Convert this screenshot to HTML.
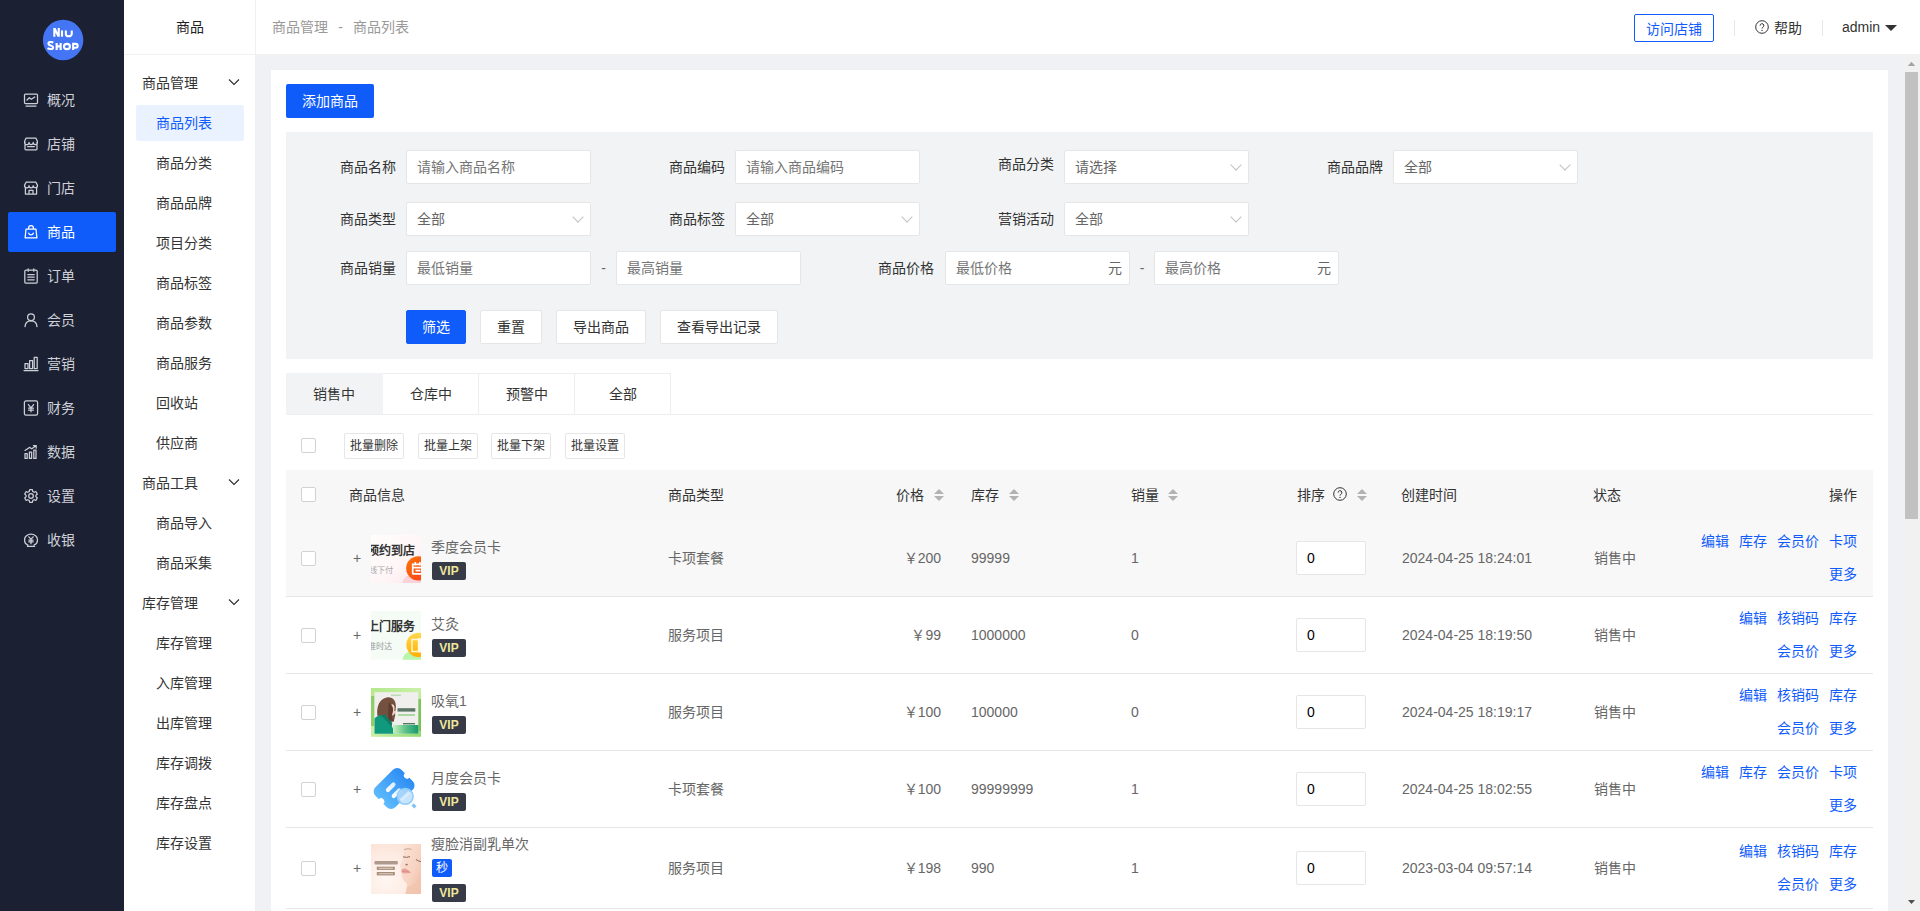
<!DOCTYPE html>
<html lang="zh-CN">
<head>
<meta charset="utf-8">
<title>商品列表</title>
<style>
*{box-sizing:border-box;margin:0;padding:0}
html,body{width:1920px;height:911px;overflow:hidden}
body{font-family:"Liberation Sans",sans-serif;font-size:14px;color:#333;background:#f0f1f4;position:relative}
a{text-decoration:none;color:inherit}
/* ===== first level sidebar ===== */
.side1{position:absolute;left:0;top:0;width:124px;height:911px;background:#1c2033}
.logo{position:absolute;left:42px;top:19px;width:41px;height:41px;border-radius:50%;background:#3f73f5;color:#fff;text-align:center;font-weight:bold;line-height:1}
.logo span{display:block;font-variant:small-caps;letter-spacing:.3px}
.logo .l1{font-size:12px;margin-top:7px;height:12px}
.logo .l2{font-size:14px;height:13px;margin-top:0}
.m1{position:absolute;left:8px;width:108px;height:40px;border-radius:2px;color:#ced0d8;font-size:14px;line-height:40px}
.m1 svg{position:absolute;left:15px;top:12px;width:16px;height:16px;fill:none;stroke:#ced0d8;stroke-width:1.250;stroke-linecap:round;stroke-linejoin:round}
.m1 span{position:absolute;left:39px;top:0}
.m1.on{background:#105cfb;color:#fff}
.m1.on svg{stroke:#fff}
/* ===== second level sidebar ===== */
.side2{position:absolute;left:124px;top:0;width:132px;height:911px;background:#fff;border-right:1px solid #f0f0f0}
.side2 .hd{height:55px;line-height:54px;text-align:center;border-bottom:1px solid #f0f0f0;color:#222;font-size:14px}
.g{position:absolute;left:18px;width:100px;height:20px;line-height:20px;color:#333}
.g svg{position:absolute;left:86px;top:5px;width:12px;height:8px;fill:none;stroke:#333;stroke-width:1.2}
.s{position:absolute;left:12px;width:108px;height:36px;line-height:36px;padding-left:20px;color:#333;border-radius:2px}
.s.on{background:#ebf2ff;color:#105cfb}
/* ===== header ===== */
.top{position:absolute;left:256px;top:0;width:1664px;height:55px;background:#fff;border-bottom:1px solid #f0f0f0}
.crumb{position:absolute;left:16px;top:0;line-height:54px;color:#999;font-size:14px;white-space:nowrap}
.crumb i{font-style:normal;display:inline-block;width:25px;text-align:center}
.visit{position:absolute;left:1378px;top:14px;width:80px;height:28px;border:1px solid #105cfb;border-radius:2px;color:#105cfb;text-align:center;line-height:28px;font-size:14px}
.vline{position:absolute;top:20px;width:1px;height:16px;background:#e6e6e6}
.help{position:absolute;left:1499px;top:0;line-height:57px;color:#333}
.help svg{position:absolute;left:0;top:20px;width:14px;height:14px}
.help span{padding-left:19px}
.admin{position:absolute;left:1586px;top:0;line-height:55px;color:#333}
.admin i{position:absolute;left:43px;top:25px;border:6px solid transparent;border-top-color:#333;border-bottom:0;width:0;height:0}
/* ===== scrollbar ===== */
.sb{position:absolute;left:1903px;top:55px;width:17px;height:856px;background:#f1f1f1}
.sb .th{position:absolute;left:2px;top:17px;width:13px;height:447px;background:#c1c1c1}
.sb .up{position:absolute;left:4.800px;top:6.700px;width:7.400px;height:4.300px;background:#a3a3a3;clip-path:polygon(50% 0,100% 100%,0 100%)}
.sb .dn{position:absolute;left:4.800px;top:844.700px;width:7.400px;height:4.300px;background:#505050;clip-path:polygon(0 0,100% 0,50% 100%)}
/* ===== content card ===== */
.card{position:absolute;left:271px;top:70px;width:1617px;height:841px;background:#fff}
.abs{position:absolute}
.btn-add{left:15px;top:14px;width:88px;height:34px;background:#105cfb;color:#fff;border-radius:2px;text-align:center;line-height:34px}
.filter{left:15px;top:62px;width:1587px;height:227px;background:#f2f3f5}
.lb{position:absolute;width:90px;text-align:right;color:#333;height:34px;line-height:34px}
.ip{position:absolute;width:185px;height:34px;background:#fff;border:1px solid #e6e6e6;border-radius:2px;line-height:32px;padding-left:10px;color:#757575}
.ip.sel{color:#666}
.ip.sel:after{content:"";position:absolute;right:8px;top:10px;width:7px;height:7px;border-right:1px solid #c2c2c2;border-bottom:1px solid #c2c2c2;transform:rotate(45deg)}
.ip em{position:absolute;right:7px;top:0;font-style:normal;color:#666}
.dash{position:absolute;width:25px;text-align:center;line-height:34px;color:#666}
.fb{position:absolute;top:178px;height:34px;line-height:32px;border:1px solid #e6e6e6;border-radius:2px;background:#fff;color:#333;text-align:center}
.fb.pri{background:#105cfb;border-color:#105cfb;color:#fff}
/* tabs */
.tabs{left:15px;top:303px;width:1587px;height:42px;border-bottom:1px solid #eee}
.tab{position:absolute;top:0;width:96px;height:41px;line-height:40px;text-align:center;border:1px solid #eee;border-left:0;border-bottom:0;color:#333}
.tab.on{background:#f2f3f5;border-color:#f2f3f5;width:97px}
.ck{position:absolute;width:15px;height:15px;border:1px solid #d2d2d2;border-radius:2px;background:#fff}
.bb{position:absolute;top:363px;width:60px;height:26px;border:1px solid #e6e6e6;border-radius:2px;font-size:12px;line-height:24px;text-align:center;color:#333;background:#fff}
/* table */
.thead{left:15px;top:400px;width:1587px;height:50px;background:#f7f7f7;line-height:50px;color:#333}
.thead span{position:absolute;top:0;white-space:nowrap}
.sort{position:absolute;width:10px;height:14px}
.sort:before,.sort:after{content:"";position:absolute;left:0;border:5px solid transparent}
.sort:before{top:-4px;border-bottom-color:#b2b2b2}
.sort:after{top:8px;border-top-color:#b2b2b2}
.row{position:absolute;left:15px;width:1587px;border-bottom:1px solid #e6e6e6;color:#666}
.row.hov{background:#f8f8f8}
.row .c{position:absolute;white-space:nowrap;line-height:20px;height:20px}
.row .plus{left:67px;color:#666;font-size:14px}
.row .img{position:absolute;left:85px;width:50px;height:50px;overflow:hidden}
.row .ttl{left:145px;color:#666}
.vip{position:absolute;left:146px;width:34px;height:18px;background:#373a47;border-radius:2px;color:#eee79c;font-size:12px;line-height:18px;text-align:center;font-weight:bold;letter-spacing:0}
.miao{position:absolute;left:146px;width:20px;height:18px;background:#105cfb;border-radius:2px;color:#fff;font-size:12px;line-height:18px;text-align:center}
.num{position:absolute;left:1010px;width:70px;height:34px;border:1px solid #e6e6e6;border-radius:2px;background:#fff;color:#000;line-height:32px;padding-left:10px}
.ops{position:absolute;right:16px;text-align:right;color:#105cfb;line-height:33px;white-space:nowrap}
.ops a{margin-left:10px;color:#105cfb}
</style>
</head>
<body>
<!-- SIDE1 -->
<div class="side1" id="side1">
<svg class="logo2" viewBox="0 0 42 42" width="42" height="42" style="position:absolute;left:42px;top:19px"><circle cx="21.100" cy="21" r="20.200" fill="#4475f5"/><g fill="none" stroke="#fff" stroke-width="2.100" stroke-linejoin="miter"><path stroke="none" fill="#fff" d="M11.300 9.100h2.300l2.100 4.300V9.100h2.100v8.600h-2.300l-2.100-4.300v4.300h-2.100z"/><path d="M20 11.400v6.300"/><path d="M23.850 11.400v3.600a2.950 2.300 0 0 0 5.900 0v-3.600"/><path d="M11.300 23.600c-1.400-.9-4.900-.9-4.900 1.100 0 2.300 4.700 1.300 4.700 3.700 0 2.100-3.900 1.900-5.600.8"/><path d="M14.650 24v7M18.650 24v7M14.650 27.400h4"/><ellipse cx="24.950" cy="27.500" rx="3" ry="2.600"/><path d="M31.150 31v-6.100h2.600a1.900 1.900 0 0 1 0 3.800h-2.600"/></g></svg>
<a class="m1" style="top:80px"><svg viewBox="0 0 16 16"><rect x="1.5" y="2" width="13" height="9.5" rx="1"/><path d="M3 14h10M4 8l2.3-2.3 2 1.6L11.8 5"/></svg><span>概况</span></a>
<a class="m1" style="top:124px"><svg viewBox="0 0 16 16"><path d="M2 6.2V13a.8.8 0 0 0 .8.8h10.4a.8.8 0 0 0 .8-.8V6.2M1.6 5.2 3 2.2h10l1.4 3v1.2a2.1 2.1 0 0 1-4.2 0 2.1 2.1 0 0 1-4.2 0 2.1 2.1 0 0 1-4.4 0z"/><path d="M4.6 10.6h6.8"/></svg><span>店铺</span></a>
<a class="m1" style="top:168px"><svg viewBox="0 0 16 16"><path d="M2.4 7.2V14h11.2V7.2M1.5 5.4 3.2 2h9.6l1.7 3.4a2.1 2.1 0 0 1-4.3.3 2.1 2.1 0 0 1-4.2 0 2.1 2.1 0 0 1-4.5-.3zM6 14v-3.6h4V14"/></svg><span>门店</span></a>
<a class="m1 on" style="top:212px"><svg viewBox="0 0 16 16"><path d="M3 5.2h10l.9 8.6H2.1zM5.6 5V4a2.4 2.4 0 0 1 4.8 0v1M5.7 9.2a2.4 2.4 0 0 0 4.6 0"/></svg><span>商品</span></a>
<a class="m1" style="top:256px"><svg viewBox="0 0 16 16"><rect x="1.800" y="2" width="12.400" height="13.200" rx="1.300"/><path d="M5.200.800v2.400M10.800.800v2.400M4.800 6.600h6.400M4.800 9.200h6.400M4.800 11.800h6.400"/></svg><span>订单</span></a>
<a class="m1" style="top:300px"><svg viewBox="0 0 16 16"><circle cx="8" cy="5.2" r="3.4"/><path d="M2 14.6c.3-3.6 2.6-5.8 6-5.8s5.700 2.2 6 5.8"/></svg><span>会员</span></a>
<a class="m1" style="top:344px"><svg viewBox="0 0 16 16"><path d="M1 14.600h14"/><rect x="2" y="7.6" width="3" height="5"/><rect x="6.600" y="4.600" width="3" height="8"/><rect x="11.2" y="1.4" width="3" height="11.200"/></svg><span>营销</span></a>
<a class="m1" style="top:388px"><svg viewBox="0 0 16 16"><rect x="1.400" y=".900" width="13.200" height="14.200" rx="1.600"/><path d="M5.400 4.600 8 7.800l2.600-3.200M8 7.800v4M5.600 8.200h4.800M5.600 10.200h4.800"/></svg><span>财务</span></a>
<a class="m1" style="top:432px"><svg viewBox="0 0 16 16"><path d="M2 9.600h2.200v4.800H2zM6.400 8h2.200v6.400H6.400zM10.800 6.200H13v8.200h-2.200zM2 6.400l4.400-3 2.400 1.400L13 1.800M10.400 1.600h2.800v2.600"/></svg><span>数据</span></a>
<a class="m1" style="top:476px"><svg viewBox="0 0 16 16"><circle cx="8" cy="8" r="2.300"/><path d="M6.700 1.600h2.600l.5 1.900 1.300.75 1.900-.55 1.300 2.250-1.400 1.400v1.300l1.400 1.400-1.300 2.250-1.900-.55-1.300.75-.5 1.900H6.700l-.5-1.900-1.300-.75-1.900.55-1.300-2.250 1.400-1.400v-1.300l-1.400-1.400L3 3.700l1.900.55 1.300-.75z"/></svg><span>设置</span></a>
<a class="m1" style="top:520px"><svg viewBox="0 0 16 16"><path d="M1.600 7.200a6.400 5 0 0 1 12.800 0v1.600a6.400 5 0 0 1-3.400 4.400"/><path d="M1.600 7.200v1.600a6.400 5 0 0 0 3.400 4.400M4.400 14.400h7.200M5.800 4.800 8 7.200l2.200-2.400M8 7.200v4.600M5.800 8h4.400M5.800 9.800h4.400"/></svg><span>收银</span></a>
</div>
<!-- SIDE2 -->
<div class="side2" id="side2">
<div class="hd">商品</div>
<div class="g" style="top:73px">商品管理<svg viewBox="0 0 12 8"><path d="M1 1.500l5 5 5-5"/></svg></div>
<a class="s on" style="top:105px">商品列表</a>
<a class="s" style="top:145px">商品分类</a>
<a class="s" style="top:185px">商品品牌</a>
<a class="s" style="top:225px">项目分类</a>
<a class="s" style="top:265px">商品标签</a>
<a class="s" style="top:305px">商品参数</a>
<a class="s" style="top:345px">商品服务</a>
<a class="s" style="top:385px">回收站</a>
<a class="s" style="top:425px">供应商</a>
<div class="g" style="top:473px">商品工具<svg viewBox="0 0 12 8"><path d="M1 1.500l5 5 5-5"/></svg></div>
<a class="s" style="top:505px">商品导入</a>
<a class="s" style="top:545px">商品采集</a>
<div class="g" style="top:593px">库存管理<svg viewBox="0 0 12 8"><path d="M1 1.500l5 5 5-5"/></svg></div>
<a class="s" style="top:625px">库存管理</a>
<a class="s" style="top:665px">入库管理</a>
<a class="s" style="top:705px">出库管理</a>
<a class="s" style="top:745px">库存调拨</a>
<a class="s" style="top:785px">库存盘点</a>
<a class="s" style="top:825px">库存设置</a>
</div>
<!-- TOP -->
<div class="top" id="top">
<div class="crumb">商品管理<i>-</i>商品列表</div>
<a class="visit">访问店铺</a>
<i class="vline" style="left:1478px"></i>
<div class="help"><svg viewBox="0 0 14 14"><circle cx="7" cy="7" r="6.300" fill="none" stroke="#333" stroke-width="1"/><path d="M5.100 5.600a1.900 1.900 0 1 1 2.700 1.700c-.6.300-.8.600-.8 1.300" fill="none" stroke="#333" stroke-width="1"/><circle cx="7" cy="10.400" r=".7" fill="#333"/></svg><span>帮助</span></div>
<i class="vline" style="left:1566px"></i>
<div class="admin">admin<i></i></div>
</div>
<!-- CARD -->
<div class="card" id="card">
<a class="abs btn-add">添加商品</a>
<div class="abs filter">
<label class="lb" style="left:20px;top:18px">商品名称</label>
<div class="ip " style="left:120px;top:18px">请输入商品名称</div>
<label class="lb" style="left:349px;top:18px">商品编码</label>
<div class="ip " style="left:449px;top:18px">请输入商品编码</div>
<label class="lb" style="left:678px;top:15px">商品分类</label>
<div class="ip sel ph" style="left:778px;top:18px">请选择</div>
<label class="lb" style="left:1007px;top:18px">商品品牌</label>
<div class="ip sel" style="left:1107px;top:18px">全部</div>
<label class="lb" style="left:20px;top:70px">商品类型</label>
<div class="ip sel" style="left:120px;top:70px">全部</div>
<label class="lb" style="left:349px;top:70px">商品标签</label>
<div class="ip sel" style="left:449px;top:70px">全部</div>
<label class="lb" style="left:678px;top:70px">营销活动</label>
<div class="ip sel" style="left:778px;top:70px">全部</div>
<label class="lb" style="left:20px;top:119px">商品销量</label>
<div class="ip " style="left:120px;top:119px">最低销量</div>
<span class="dash" style="left:305px;top:119px">-</span>
<div class="ip " style="left:330px;top:119px">最高销量</div>
<label class="lb" style="left:558px;top:119px">商品价格</label>
<div class="ip " style="left:659px;top:119px">最低价格<em>元</em></div>
<span class="dash" style="left:844px;top:119px;width:24px">-</span>
<div class="ip " style="left:868px;top:119px">最高价格<em>元</em></div>
<a class="fb pri" style="left:120px;width:60px">筛选</a>
<a class="fb" style="left:194px;width:62px">重置</a>
<a class="fb" style="left:270px;width:90px">导出商品</a>
<a class="fb" style="left:374px;width:118px">查看导出记录</a>
</div>
<div class="abs tabs">
<a class="tab on" style="left:0px">销售中</a>
<a class="tab" style="left:97px">仓库中</a>
<a class="tab" style="left:193px">预警中</a>
<a class="tab" style="left:289px">全部</a>
</div>
<i class="ck" style="left:30px;top:368px"></i>
<a class="bb" style="left:73px">批量删除</a>
<a class="bb" style="left:147px">批量上架</a>
<a class="bb" style="left:220px">批量下架</a>
<a class="bb" style="left:294px">批量设置</a>
<div class="abs thead">
<i class="ck" style="left:15px;top:17px"></i>
<span style="left:63px">商品信息</span>
<span style="left:382px">商品类型</span>
<span style="left:610px">价格</span><i class="sort" style="left:648px;top:18px"></i>
<span style="left:685px">库存</span><i class="sort" style="left:723px;top:18px"></i>
<span style="left:845px">销量</span><i class="sort" style="left:882px;top:18px"></i>
<span style="left:1011px">排序</span><svg class="abs" style="left:1047.300px;top:17px;width:14px;height:14px" viewBox="0 0 14 14"><circle cx="7" cy="7" r="6.300" fill="none" stroke="#333" stroke-width="1"/><path d="M5.100 5.600a1.900 1.900 0 1 1 2.700 1.700c-.6.300-.8.600-.8 1.300" fill="none" stroke="#333" stroke-width="1"/><circle cx="7" cy="10.400" r=".7" fill="#333"/></svg><i class="sort" style="left:1071px;top:18px"></i>
<span style="left:1115px">创建时间</span>
<span style="left:1307px">状态</span>
<span style="right:16px">操作</span>
</div>
<div class="row hov" style="top:450px;height:77px">
<i class="ck" style="left:15px;top:31px"></i><span class="c plus" style="top:28px">+</span><div class="img" style="top:14.6px;height:48.4px"><svg viewBox="0 0 50 48.400" width="50" height="48.400" preserveAspectRatio="none"><defs><linearGradient id="g1" x1="0" y1="0" x2="1" y2="1"><stop offset="0" stop-color="#fffdfd"/><stop offset=".6" stop-color="#fff5f6"/><stop offset="1" stop-color="#fde6eb"/></linearGradient><linearGradient id="g1o" x1="0" y1="0" x2="1" y2="1"><stop offset="0" stop-color="#f87808"/><stop offset="1" stop-color="#ff3a1c"/></linearGradient></defs><rect width="50" height="48.400" fill="url(#g1)"/><text x="-4.400" y="19.800" font-family="Liberation Sans,sans-serif" font-weight="bold" font-size="12" fill="#333">预约到店</text><text x="-2.300" y="37.600" font-family="Liberation Sans,sans-serif" font-size="8.200" fill="#a9a9a9">线下付</text><path d="M31.500 48.400c.5-5 4-8.500 9-8.500H50v8.500z" fill="#f9d3da"/><circle cx="47.300" cy="33.300" r="12.150" fill="url(#g1o)"/><path d="M41.700 29.300h10v9.600h-9a1 1 0 0 1-1-1zM41.700 32.600h9M44.300 27v3.500M48.800 27v3.500M44.500 35.600h5" stroke="#fff" stroke-width="1.700" fill="none"/></svg></div>
<span class="c ttl" style="top:17px">季度会员卡</span><span class="vip" style="top:42px">VIP</span>
<span class="c" style="left:382px;top:28px">卡项套餐</span><span class="c" style="right:932px;top:28px">￥200</span><span class="c" style="left:685px;top:28px">99999</span><span class="c" style="left:845px;top:28px">1</span><div class="num" style="top:21px">0</div><span class="c" style="left:1116px;top:28px">2024-04-25 18:24:01</span><span class="c" style="left:1308px;top:28px">销售中</span>
<div class="ops" style="top:5px"><a>编辑</a><a>库存</a><a>会员价</a><a>卡项</a><br><a>更多</a></div>
</div>
<div class="row" style="top:527px;height:77px">
<i class="ck" style="left:15px;top:31px"></i><span class="c plus" style="top:28px">+</span><div class="img" style="top:14.1px;height:48.7px"><svg viewBox="0 0 50 48.700" width="50" height="48.700" preserveAspectRatio="none"><defs><linearGradient id="g2o" x1="0" y1="0" x2="0" y2="1"><stop offset="0" stop-color="#ffd94f"/><stop offset="1" stop-color="#ffae00"/></linearGradient></defs><rect width="50" height="48.700" fill="#f5fcf6"/><text x="-4.300" y="19.800" font-family="Liberation Sans,sans-serif" font-weight="bold" font-size="12" fill="#333">上门服务</text><text x="-3.300" y="37.800" font-family="Liberation Sans,sans-serif" font-size="8.200" fill="#9a9a9a">准时达</text><path d="M31.500 48.700c.8-5 4.500-8.500 9.500-8.500H50v8.500z" fill="#b9f5ab"/><circle cx="47.500" cy="33.800" r="12.150" fill="url(#g2o)"/><path d="M41 28.500h9v12h-9z" fill="none" stroke="#fff7d6" stroke-width="1.400"/><rect x="46.800" y="27.300" width="3.200" height="14" fill="#fffbe8"/></svg></div>
<span class="c ttl" style="top:17px">艾灸</span><span class="vip" style="top:42px">VIP</span>
<span class="c" style="left:382px;top:28px">服务项目</span><span class="c" style="right:932px;top:28px">￥99</span><span class="c" style="left:685px;top:28px">1000000</span><span class="c" style="left:845px;top:28px">0</span><div class="num" style="top:21px">0</div><span class="c" style="left:1116px;top:28px">2024-04-25 18:19:50</span><span class="c" style="left:1308px;top:28px">销售中</span>
<div class="ops" style="top:5px"><a>编辑</a><a>核销码</a><a>库存</a><br><a>会员价</a><a>更多</a></div>
</div>
<div class="row" style="top:604px;height:77px">
<i class="ck" style="left:15px;top:31px"></i><span class="c plus" style="top:28px">+</span><div class="img" style="top:14px;height:48.8px"><svg viewBox="0 0 50 48.800" width="50" height="48.800" preserveAspectRatio="none"><defs><linearGradient id="g3" x1="0" y1="0" x2="1" y2="1"><stop offset="0" stop-color="#b4e88c"/><stop offset=".5" stop-color="#c9f0a8"/><stop offset="1" stop-color="#8fd86e"/></linearGradient><linearGradient id="g3b" x1="0" y1="0" x2="1" y2="0"><stop offset="0" stop-color="#c9f2bb"/><stop offset=".5" stop-color="#5cc088"/><stop offset="1" stop-color="#18996c"/></linearGradient></defs><rect width="50" height="48.800" fill="url(#g3)"/><rect x="0" y="8" width="3.500" height="30" fill="#79c257" opacity=".7"/><rect x="46.800" y="11" width="3.200" height="32" fill="#6dbb4e" opacity=".8"/><rect x="3.500" y="4.200" width="43.800" height="41.500" fill="#f1efee"/><path d="M6.300 27c-.8-9 2.500-16.500 9.500-17.600 6-.9 9.500 3.500 9 9.500-.3 3-1 5-.5 8l-1.500 6.500H9z" fill="#74503f"/><ellipse cx="21.300" cy="21.800" rx="3.300" ry="5.600" fill="#f1d4c3"/><path d="M17.500 14.500c3 1.500 5.500 5 4.300 9.500-.6 2.500-1.300 4-.6 6.500l1.600 2.800-5.800.7z" fill="#5f3e31"/><path d="M22.500 14.500c1.500 2.500 2 5.500 1.200 8.500" stroke="#6e4a3a" stroke-width="1" fill="none"/><path d="M3.500 45.700V30.500c1.500-2 4-3 6.500-3.300 3.500 3 8 8 10.500 10.800 1.500 2 3 5 3.500 7.700z" fill="#10997c"/><path d="M10 27.200c3 3 7.500 8 10.500 11.800l.8-4c-3-3-5.500-6-7-8.500z" fill="#0d7d66"/><rect x="22" y="37" width="25.300" height="8.700" fill="url(#g3b)"/><rect x="26.500" y="20.200" width="17.800" height="3.400" fill="#3f5f4b" opacity=".85"/><rect x="27" y="26" width="17" height="2" fill="#a9d9a0"/><rect x="32" y="35" width="12" height="1.400" fill="#4e7a5c"/><rect x="20" y="6.500" width="10" height="1.600" fill="#bcd8b4"/></svg></div>
<span class="c ttl" style="top:17px">吸氧1</span><span class="vip" style="top:42px">VIP</span>
<span class="c" style="left:382px;top:28px">服务项目</span><span class="c" style="right:932px;top:28px">￥100</span><span class="c" style="left:685px;top:28px">100000</span><span class="c" style="left:845px;top:28px">0</span><div class="num" style="top:21px">0</div><span class="c" style="left:1116px;top:28px">2024-04-25 18:19:17</span><span class="c" style="left:1308px;top:28px">销售中</span>
<div class="ops" style="top:5px"><a>编辑</a><a>核销码</a><a>库存</a><br><a>会员价</a><a>更多</a></div>
</div>
<div class="row" style="top:681px;height:77px">
<i class="ck" style="left:15px;top:31px"></i><span class="c plus" style="top:28px">+</span><div class="img" style="top:13.5px;height:50px"><svg viewBox="0 0 50 50" width="50" height="50"><defs><linearGradient id="g4" x1="0" y1=".5" x2="1" y2=".5"><stop offset="0" stop-color="#5dbbfc"/><stop offset="1" stop-color="#2d8cf4"/></linearGradient><linearGradient id="g4w" x1="0" y1="0" x2="1" y2="0"><stop offset="0" stop-color="#fff"/><stop offset="1" stop-color="#d4ebff"/></linearGradient></defs><g transform="translate(23.100 23.500) rotate(-45)"><path d="M-12.40 -14.05h24.80a6 6 0 0 1 6 6V-3.2a3.2 3.2 0 0 0 0 6.4V8.05a6 6 0 0 1 -6 6H-12.40a6 6 0 0 1 -6 -6V3.2a3.2 3.2 0 0 0 0 -6.4V-8.05a6 6 0 0 1 6 -6z" fill="url(#g4)"/><rect x="-7.500" y="-5.400" width="12" height="4.200" rx="2.100" fill="url(#g4w)"/><rect x="-7.700" y="3" width="12" height="4.200" rx="2.100" fill="url(#g4w)"/></g><circle cx="34.200" cy="31.400" r="7.900" fill="#b9defd" fill-opacity=".82" stroke="#8ecbfb" stroke-width="1.500"/><path d="M29.500 35.500l9-8.500" stroke="#e9f5ff" stroke-width="3" stroke-opacity=".7"/><path d="M41.600 39.500l2.800 2.800" stroke="#7fc3fa" stroke-width="3.200"/></svg></div>
<span class="c ttl" style="top:17px">月度会员卡</span><span class="vip" style="top:42px">VIP</span>
<span class="c" style="left:382px;top:28px">卡项套餐</span><span class="c" style="right:932px;top:28px">￥100</span><span class="c" style="left:685px;top:28px">99999999</span><span class="c" style="left:845px;top:28px">1</span><div class="num" style="top:21px">0</div><span class="c" style="left:1116px;top:28px">2024-04-25 18:02:55</span><span class="c" style="left:1308px;top:28px">销售中</span>
<div class="ops" style="top:5px"><a>编辑</a><a>库存</a><a>会员价</a><a>卡项</a><br><a>更多</a></div>
</div>
<div class="row" style="top:758px;height:81px">
<i class="ck" style="left:15px;top:33px"></i><span class="c plus" style="top:30px">+</span><div class="img" style="top:16px;height:50px"><svg viewBox="0 0 50 50" width="50" height="50"><defs><radialGradient id="g5" cx=".3" cy=".7" r=".85"><stop offset="0" stop-color="#fff6f2"/><stop offset=".6" stop-color="#fdebe2"/><stop offset="1" stop-color="#fbdfd1"/></radialGradient><linearGradient id="g5f" x1="0" y1="0" x2="1" y2="1"><stop offset="0" stop-color="#fbe6da"/><stop offset=".6" stop-color="#f7d2c0"/><stop offset="1" stop-color="#eebba6"/></linearGradient></defs><rect width="50" height="50" fill="url(#g5)"/><path d="M50 0H40c-4 1.500-6.500 5-7.500 9.500-.6 2.800-.5 5-1.500 7.500l-1.800 4.500c-.4 1 .2 1.800 1.200 2-.6 1.200-.8 2.200-.2 3 .3 1 .2 2 .2 3 .3 3.500 1.200 6.500 3.600 8.300 1.500 1.200 2.500 2.500 2 5.500L34.500 50H50z" fill="url(#g5f)"/><path d="M36 43c4-1 8-3.500 11-7.500 1.500-2 2.500-4 3-5.500v20H34.500z" fill="#f1c4af" opacity=".8"/><path d="M33 5.800q4-2 7.500-.3" stroke="#caa594" stroke-width="1.100" fill="none"/><path d="M32 12.800q3.500 1.300 7-.2" stroke="#8c6a5c" stroke-width="1" fill="none"/><path d="M45 15.500q2.500 2 5 2" stroke="#8c6a5c" stroke-width="1" fill="none"/><ellipse cx="35.600" cy="20.600" rx="1.300" ry=".9" fill="#a77562"/><path d="M30.500 25.500c2-.8 3-1.500 4.500-.8 1.800.8 3.500 2.200 4.500 3.800-2 .8-5.500 1.300-8.200.5-.8-1.200-.6-2.300-.8-3.500z" fill="#e9a29b"/><path d="M30.800 27.300c3 .2 6-.2 8.700 1.200" stroke="#cf817b" stroke-width=".6" fill="none"/><rect x="3.500" y="17" width="23.300" height="3.600" rx=".8" fill="#7d6555" opacity=".62"/><rect x="5.800" y="22.700" width="18" height="3.200" fill="#a58d79"/><rect x="5.800" y="28" width="18" height="3.400" fill="#a58d79"/><rect x="7.500" y="23.700" width="14.500" height="1.200" fill="#e8dccf" opacity=".7"/><rect x="7.500" y="29.100" width="14.500" height="1.200" fill="#e8dccf" opacity=".7"/></svg></div>
<span class="c ttl" style="top:6px">瘦脸消副乳单次</span><span class="miao" style="top:31px">秒</span><span class="vip" style="top:56px">VIP</span>
<span class="c" style="left:382px;top:30px">服务项目</span><span class="c" style="right:932px;top:30px">￥198</span><span class="c" style="left:685px;top:30px">990</span><span class="c" style="left:845px;top:30px">1</span><div class="num" style="top:23px">0</div><span class="c" style="left:1116px;top:30px">2023-03-04 09:57:14</span><span class="c" style="left:1308px;top:30px">销售中</span>
<div class="ops" style="top:7px"><a>编辑</a><a>核销码</a><a>库存</a><br><a>会员价</a><a>更多</a></div>
</div>
</div>
<!-- SCROLLBAR -->
<div class="sb"><i class="up"></i><div class="th"></div><i class="dn"></i></div>
</body>
</html>
